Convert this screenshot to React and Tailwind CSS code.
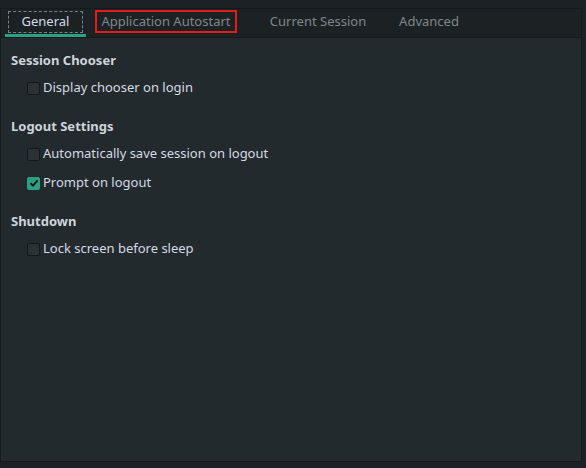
import React, { useState } from 'react';

const tabs = [
    { name: 'General', w: 'w-[81px]' },
    { name: 'Application Autostart', w: 'w-[160px]' },
    { name: 'Current Session', w: 'w-[144px]' },
    { name: 'Advanced', w: 'w-[78px]' },
];

const Check = ({ checked, label }) => (
    <label className="flex items-center h-[22px] pl-[26px] text-[13px] text-[#d3dae3]">
        <span
            className={`w-[13px] h-[13px] rounded-[2px] border flex items-center justify-center mr-[3px] ${checked ? 'bg-[#2aa183] border-[#2aa183]' : 'bg-[#2a3235] border-[#14181a]'}`}
        >
            {checked && (
                <svg width="10" height="10" viewBox="0 0 10 10">
                    <path d="M1.5 5.2 L4 7.6 L8.6 2.4" fill="none" stroke="#11181a" strokeWidth="2" />
                </svg>
            )}
        </span>
        {label}
    </label>
);

const Section = ({ title, children }) => (
    <div className="mb-[17px]">
        <div className="h-[22px] flex items-center pl-[10px] text-[13px] font-bold text-[#cdd4da]">{title}</div>
        <div className="flex flex-col gap-[7px] mt-[5px]">{children}</div>
    </div>
);

const App = () => {
    const [active] = useState(0);

    return (
        <div className="w-[586px] h-[468px] bg-[#1b2124] pt-[8px] pr-[4px] pb-[6px]" style={{ fontFamily: '"Noto Sans", sans-serif' }}>
            <div className="h-full flex flex-col border border-[#151a1c]">
                <div className="h-[29px] bg-[#1c2224] border-b border-[#151a1c] flex items-stretch pl-[4px] shrink-0">
                    {tabs.map((t, i) => (
                        <div
                            key={t.name}
                            className={`relative flex items-center justify-center text-[13px] ${t.w} ${i === active ? 'text-[#d3dae3] px-[3px]' : 'text-[#7f878b]'}`}
                        >
                            {i === active ? (
                                <span className="w-full h-[22px] mt-[-3px] border border-dashed border-[#7a8286] flex items-center justify-center">{t.name}</span>
                            ) : i === 1 ? (
                                <span className="w-[142px] h-[23px] mt-[-3px] border-2 border-[#e31b1b] flex items-center justify-center">{t.name}</span>
                            ) : (
                                <span className="mt-[-3px]">{t.name}</span>
                            )}
                            {i === active && <span className="absolute left-0 right-0 bottom-0 h-[3px] bg-[#2aa183]" />}
                        </div>
                    ))}
                </div>
                <div className="flex-1 bg-[#232a2d] pt-[12px]">
                    <Section title="Session Chooser">
                        <Check label="Display chooser on login" />
                    </Section>
                    <Section title="Logout Settings">
                        <Check label="Automatically save session on logout" />
                        <Check checked label="Prompt on logout" />
                    </Section>
                    <Section title="Shutdown">
                        <Check label="Lock screen before sleep" />
                    </Section>
                </div>
            </div>
        </div>
    );
};

export default App;
